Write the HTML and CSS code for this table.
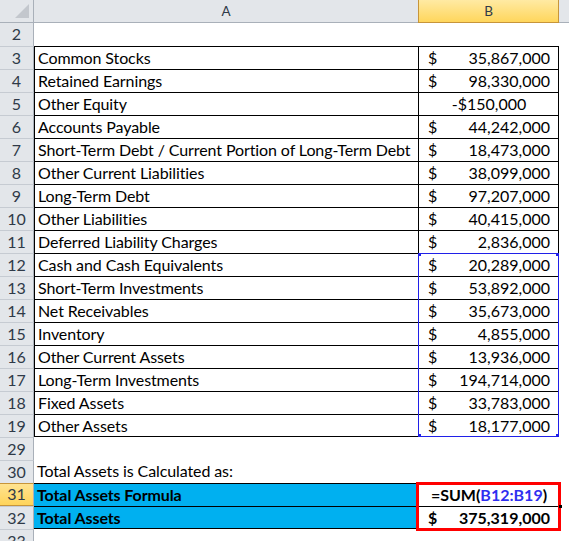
FILE: index.html
```html
<!DOCTYPE html>
<html>
<head>
<meta charset="utf-8">
<link rel="stylesheet" href="styles.css">
</head>
<body>
<div class="sheet">
  <div class="corner"><span class="tri"></span></div>
  <div class="colhd">A</div>
  <div class="colhd sel">B</div>
  <div class="colhd last"></div>

  <div class="rn first">2</div><div class="a"></div><div class="b"></div><div class="x"></div>

  <div class="rn">3</div><div class="a bd">Common Stocks</div><div class="b bd"><span>$</span><span>35,867,000</span></div><div class="x"></div>
  <div class="rn">4</div><div class="a bd">Retained Earnings</div><div class="b bd"><span>$</span><span>98,330,000</span></div><div class="x"></div>
  <div class="rn">5</div><div class="a bd">Other Equity</div><div class="b bd center"><span>-$150,000</span></div><div class="x"></div>
  <div class="rn">6</div><div class="a bd">Accounts Payable</div><div class="b bd"><span>$</span><span>44,242,000</span></div><div class="x"></div>
  <div class="rn">7</div><div class="a bd">Short-Term Debt / Current Portion of Long-Term Debt</div><div class="b bd"><span>$</span><span>18,473,000</span></div><div class="x"></div>
  <div class="rn">8</div><div class="a bd">Other Current Liabilities</div><div class="b bd"><span>$</span><span>38,099,000</span></div><div class="x"></div>
  <div class="rn">9</div><div class="a bd">Long-Term Debt</div><div class="b bd"><span>$</span><span>97,207,000</span></div><div class="x"></div>
  <div class="rn">10</div><div class="a bd">Other Liabilities</div><div class="b bd"><span>$</span><span>40,415,000</span></div><div class="x"></div>
  <div class="rn">11</div><div class="a bd">Deferred Liability Charges</div><div class="b bd"><span>$</span><span>2,836,000</span></div><div class="x"></div>
  <div class="rn">12</div><div class="a bd">Cash and Cash Equivalents</div><div class="b bd"><span>$</span><span>20,289,000</span></div><div class="x"></div>
  <div class="rn">13</div><div class="a bd">Short-Term Investments</div><div class="b bd"><span>$</span><span>53,892,000</span></div><div class="x"></div>
  <div class="rn">14</div><div class="a bd">Net Receivables</div><div class="b bd"><span>$</span><span>35,673,000</span></div><div class="x"></div>
  <div class="rn">15</div><div class="a bd">Inventory</div><div class="b bd"><span>$</span><span>4,855,000</span></div><div class="x"></div>
  <div class="rn">16</div><div class="a bd">Other Current Assets</div><div class="b bd"><span>$</span><span>13,936,000</span></div><div class="x"></div>
  <div class="rn">17</div><div class="a bd">Long-Term Investments</div><div class="b bd"><span>$</span><span>194,714,000</span></div><div class="x"></div>
  <div class="rn">18</div><div class="a bd">Fixed Assets</div><div class="b bd"><span>$</span><span>33,783,000</span></div><div class="x"></div>
  <div class="rn">19</div><div class="a bd endrow">Other Assets</div><div class="b bd endrow"><span>$</span><span>18,177,000</span></div><div class="x"></div>

  <div class="rn">29</div><div class="a"></div><div class="b"></div><div class="x"></div>
  <div class="rn">30</div><div class="a">Total Assets is Calculated as:</div><div class="b"></div><div class="x"></div>
  <div class="rn selrow">31</div><div class="a bd hl bold">Total Assets Formula</div><div class="b bd bold center"><span>=SUM(<span class="ref">B12:B19</span>)</span></div><div class="x"></div>
  <div class="rn">32</div><div class="a bd hl bold endrow">Total Assets</div><div class="b bd bold endrow"><span>$</span><span>375,319,000</span></div><div class="x"></div>
  <div class="rn">33</div><div class="a"></div><div class="b"></div><div class="x"></div>

  <div class="selbox">
    <span class="h h-tl"></span><span class="h h-tr"></span><span class="h h-bl"></span><span class="h h-br"></span>
  </div>
  <div class="redbox"></div>
  <span class="tick"></span>
</div>
</body>
</html>
```
FILE: styles.css
```css
html, body {
  margin: 0;
  padding: 0;
  background: #ffffff;
  overflow: hidden;
}

.sheet {
  position: relative;
  display: grid;
  grid-template-columns: 34px 384px 141px 10px;
  grid-auto-rows: 23px;
  font-family: Lato, "Liberation Sans", sans-serif;
  font-size: 16px;
  color: #000;
}

.sheet > div {
  box-sizing: border-box;
  line-height: 22px;
  white-space: nowrap;
  overflow: hidden;
}

.corner {
  position: relative;
  background: #e3e6ea;
  border-right: 1px solid #a9b0b9;
  border-bottom: 1px solid #a9b0b9;
}

.tri {
  position: absolute;
  right: 4px;
  bottom: 4px;
  width: 0;
  height: 0;
  border-left: 14px solid transparent;
  border-bottom: 14px solid #c3c7cd;
}

.colhd {
  background: #e3e6ea;
  border-bottom: 1px solid #a9b0b9;
  text-align: center;
  font-size: 13.5px;
  color: #2f3a48;
  line-height: 22px;
}

.colhd.sel {
  background: linear-gradient(#ffeaa3, #ffd65c);
  border: 1px solid #c7953a;
  border-top: 0;
}

.colhd.last {
  border-left: 0;
}

.rn {
  background: #e3e6ea;
  border-right: 1px solid #a9b0b9;
  border-top: 1px solid #c6cbd2;
  text-align: center;
  color: #2f3a48;
}

.rn.first {
  border-top: 0;
}

.rn.selrow {
  background: linear-gradient(#ffe391, #ffd45a);
  border-top: 1px solid #c7953a;
  border-bottom: 1px solid #c7953a;
  line-height: 20px;
}

.a {
  padding-left: 3px;
  letter-spacing: -0.1px;
}

.a.bd {
  border-top: 1px solid #000;
  border-left: 1px solid #000;
}

.b.bd {
  border-top: 1px solid #000;
  border-left: 1px solid #000;
  border-right: 1px solid #000;
  display: flex;
  justify-content: space-between;
  padding: 0 8px 0 9px;
}

.b.center {
  justify-content: center;
}

.endrow {
  border-bottom: 1px solid #000;
}

.hl {
  background: #00b0f0;
  border-left: 0 !important;
}

.bold {
  font-weight: 700;
}

.ref {
  color: #2f2ff0;
}

.selbox {
  position: absolute;
  left: 418px;
  top: 253px;
  width: 141px;
  height: 184px;
  box-sizing: border-box;
  border: 1px solid #2020e8;
}

.h {
  position: absolute;
  width: 5px;
  height: 5px;
  background: #2020e8;
}

.h-tl { left: -3px; top: -3px; }
.h-tr { right: -3px; top: -3px; }
.h-bl { left: -3px; bottom: -3px; }
.h-br { right: -3px; bottom: -3px; }

.redbox {
  position: absolute;
  left: 416px;
  top: 482px;
  width: 145px;
  height: 49px;
  box-sizing: border-box;
  border: 3px solid #ff0000;
}

.tick {
  position: absolute;
  left: 559px;
  top: 505px;
  width: 3px;
  height: 3px;
  background: #000;
}
```
